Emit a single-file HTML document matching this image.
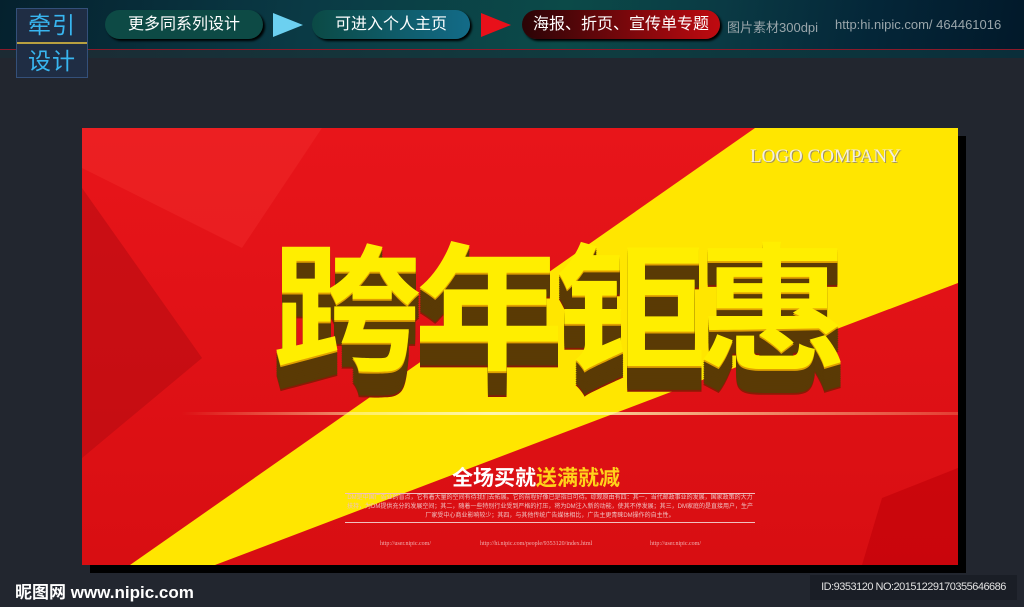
<!DOCTYPE html>
<html><head><meta charset="utf-8"><style>
*{margin:0;padding:0;box-sizing:border-box}
body{width:1024px;height:607px;overflow:hidden;background:#22262f;font-family:"Liberation Sans","Noto Sans CJK SC",sans-serif;position:relative}
.top{position:absolute;left:0;top:0;width:1024px;height:50px;background:linear-gradient(100deg,#05212e 0%,#0a3a45 30%,#0b4a48 55%,#0a3a44 70%,#042638 85%,#02192a 100%);border-bottom:1px solid #8a1a2a}
.top2{position:absolute;left:0;top:50px;width:1024px;height:8px;background:linear-gradient(90deg,#1c2a33,#0f3c40 60%,#0a2e3a);}
.logo{position:absolute;left:16px;top:8px;width:72px;height:70px;background:#1f2d44;border:1px solid #34507a;color:#38b6f0;font-size:23px;line-height:32px;text-align:center;letter-spacing:1px;overflow:hidden}
.logo hr{border:0;height:2px;background:#b8a040;margin:1px 0}
.pill{position:absolute;top:10px;height:29px;border-radius:15px;color:#fff;font-size:16px;line-height:29px;text-align:center;box-shadow:2px 2px 2px #000;white-space:nowrap}
.t{position:absolute;color:#9aa6ab;font-size:13px;top:17px;white-space:nowrap}
.poster{position:absolute;left:82px;top:128px;width:876px;height:437px;background:linear-gradient(180deg,#e8151a,#d80e12);overflow:hidden;box-shadow:8px 8px 0 #000}
.title{position:absolute;left:190px;top:108px;font-size:150px;font-weight:bold;color:#ffee00;letter-spacing:-8px;line-height:150px;transform:scaleY(.92);text-shadow:0 2px 0 #e0a000,0 4px 0 #5a3a05,0 6px 0 #5a3a05,0 8px 0 #5a3a05,0 10px 0 #5a3a05,0 12px 0 #5a3a05,0 14px 0 #5a3a05,0 16px 0 #5a3a05,0 18px 0 #5a3a05,0 20px 0 #5a3a05,0 22px 0 #5a3a05,0 24px 0 #5a3a05,0 26px 0 #5a3a05,0 28px 0 #8a1a05}
</style></head><body>
<div class="top"></div><div class="top2"></div>
<div class="logo">牵引<hr>设计</div>
<div class="pill" style="left:105px;width:158px;background:#0d4a45">更多同系列设计</div>
<div style="position:absolute;left:273px;top:13px;width:0;height:0;border-left:30px solid #6cd0f0;border-top:12px solid transparent;border-bottom:12px solid transparent"></div>
<div class="pill" style="left:312px;width:158px;background:linear-gradient(90deg,#0b4a45,#136b88)">可进入个人主页</div>
<div style="position:absolute;left:481px;top:13px;width:0;height:0;border-left:30px solid #e8101a;border-top:12px solid transparent;border-bottom:12px solid transparent"></div>
<div class="pill" style="left:522px;width:198px;background:linear-gradient(90deg,#2a0406,#c00a10)">海报、折页、宣传单专题</div>
<div class="t" style="left:727px">图片素材300dpi</div>
<div class="t" style="left:835px">http:hi.nipic.com/ 464461016</div>
<div class="poster">
<svg width="876" height="437" style="position:absolute;left:0;top:0">
<defs><linearGradient id="b" x1="0" x2="1"><stop offset="0" stop-color="#fff6b0" stop-opacity="0"/><stop offset=".4" stop-color="#fff6b0" stop-opacity="1"/><stop offset="1" stop-color="#fff6b0" stop-opacity="0.2"/></linearGradient></defs>
<polygon points="0,0 240,0 160,120 0,40" fill="#f02a2a" opacity=".5"/>
<polygon points="0,60 120,230 0,330" fill="#b00a10" opacity=".5"/>
<polygon points="673,0 876,0 876,155 133,437 48,437" fill="#ffe600"/>
<polygon points="800,370 876,340 876,437 780,437" fill="#c00008" opacity=".6"/>
<rect x="100" y="284" width="776" height="3" fill="url(#b)"/>
</svg>
<div style="position:absolute;left:668px;top:18px;font-family:'Liberation Serif',serif;font-size:19px;color:#f4efe0;text-shadow:1px 1px 0 #a09060;white-space:nowrap">LOGO COMPANY</div>
<div class="title">跨年钜惠</div>
<div style="position:absolute;left:370px;top:334px;font-size:21px;font-weight:bold;color:#fff;white-space:nowrap">全场买就<span style="color:#ffd21a">送满就减</span></div>
<div style="position:absolute;left:263px;top:365px;width:410px;border-top:1px solid #f0c0c0;border-bottom:1px solid #f0c0c0;height:30px;font-size:6px;line-height:9px;color:#f0c0c0;text-align:center;overflow:hidden">DM是中国广告业的盲点，它有着大量的空间有待我们去拓展。它的前程好像已是指日可待。综观原由有四：其一，当代邮政事业的发展，国家政策的大力扶持，为DM提供充分的发展空间；其二，随着一些特别行业受到严格的打压，将为DM注入新的动能，使其不停发展；其三，DM家庭的是直接用户，生产厂家受中心商业影响较少；其四，与其他传统广告媒体相比，广告主更青睐DM操作的自主性。</div>
<div style="position:absolute;top:413px;left:298px;font-size:6px;color:#f0b0b0;font-family:'Liberation Serif',serif">http://user.nipic.com/</div>
<div style="position:absolute;top:413px;left:398px;font-size:6px;color:#f0b0b0;font-family:'Liberation Serif',serif">http://hi.nipic.com/people/9353120/index.html</div>
<div style="position:absolute;top:413px;left:568px;font-size:6px;color:#f0b0b0;font-family:'Liberation Serif',serif">http://user.nipic.com/</div>
</div>
<div style="position:absolute;left:15px;top:578px;color:#fff;font-size:17px;font-weight:bold;white-space:nowrap">昵图网 www.nipic.com</div>
<div style="position:absolute;left:810px;top:575px;width:207px;height:25px;background:#1a1e26;color:#e0e0e0;font-size:11px;line-height:25px;text-align:center;white-space:nowrap;letter-spacing:-0.5px">ID:9353120 NO:20151229170355646686</div>
</body></html>
